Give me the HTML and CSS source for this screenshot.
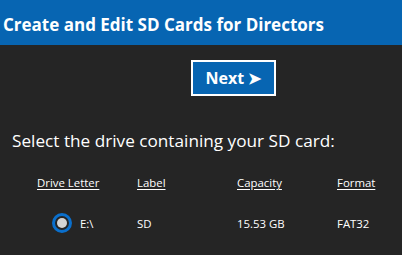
FILE: index.html
```html
<!DOCTYPE html>
<html lang="en">
<head>
    <meta charset="UTF-8">
    <title>SD Cards for Directors</title>
    <link rel="stylesheet" href="styles.css">
</head>
<body>
    <div class="header">Create and Edit SD Cards for Directors</div>

    <div class="content">
        <div class="actions">
            <button class="next-btn">Next &#x27A4;</button>
        </div>

        <div class="prompt">Select the drive containing your SD card:</div>

        <div class="drive-table">
            <div class="col-head">Drive Letter</div>
            <div class="col-head">Label</div>
            <div class="col-head">Capacity</div>
            <div class="col-head">Format</div>

            <div class="cell drive-cell">
                <span class="radio checked"></span>
                <span>E:\</span>
            </div>
            <div class="cell">SD</div>
            <div class="cell">15.53 GB</div>
            <div class="cell">FAT32</div>
        </div>
    </div>
</body>
</html>
```

FILE: styles.css
```css
body {
    margin: 0;
    padding: 0;
    background: #252525;
    font-family: "Open Sans", "Noto Sans", sans-serif;
    color: white;
    width: 402px;
    height: 255px;
    overflow: hidden;
}

.header {
    background: #0765b2;
    height: 45px;
    box-sizing: border-box;
    padding: 13px 0 0 3px;
    font-size: 17px;
    font-weight: bold;
}

.actions {
    padding: 15px 0 0 191px;
}

.next-btn {
    width: 85px;
    height: 36px;
    background: #0765b2;
    border: 2px solid white;
    color: white;
    font-family: inherit;
    font-size: 16px;
    font-weight: bold;
    padding: 0;
    cursor: pointer;
}

.prompt {
    margin: 33px 0 0 12px;
    font-size: 17.2px;
}

.drive-table {
    display: grid;
    grid-template-columns: 100px 100px 100px auto;
    margin: 23px 0 0 37px;
    row-gap: 23px;
    font-size: 11.4px;
}

.col-head {
    text-decoration: underline;
    text-underline-offset: 2px;
}

.cell {
    display: flex;
    align-items: center;
    height: 20px;
}

.drive-cell {
    gap: 8px;
    padding-left: 15px;
}

.radio {
    width: 20px;
    height: 20px;
    box-sizing: border-box;
    border: 3px solid #0a6fcc;
    border-radius: 50%;
    display: flex;
    align-items: center;
    justify-content: center;
}

.radio.checked::after {
    content: "";
    width: 10px;
    height: 10px;
    border-radius: 50%;
    background: #d4d4d4;
}
```
